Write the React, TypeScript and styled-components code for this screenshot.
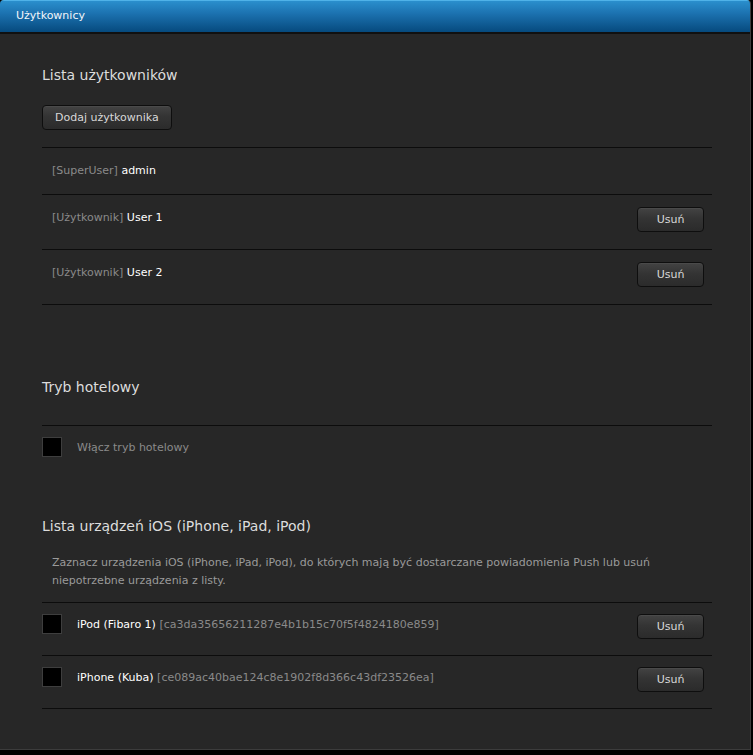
import styled, { createGlobalStyle } from "styled-components";

const GlobalStyle = createGlobalStyle`
  html, body {
    margin: 0;
    padding: 0;
    background: #000;
  }
  body {
    font-family: "DejaVu Sans", Verdana, sans-serif;
    font-size: 11px;
  }
`;

const Panel = styled.div`
  width: 750px;
  height: 749px;
  background-color: #272727;
  border-right: 1px solid #3c3c3c;
  border-bottom: 1px solid #3c3c3c;
  border-radius: 4px 4px 0 0;
  overflow: hidden;
`;

const Header = styled.div`
  background: linear-gradient(to bottom, #2a8fcd 0%, #1c72b0 40%, #064a7e 100%);
  border-top: 1px solid #4fb2e8;
  border-bottom: 2px solid #101010;
  box-sizing: border-box;
  height: 34px;
  display: flex;
  align-items: center;
  padding-left: 16px;
  padding-bottom: 2px;
  color: #f2f6fa;
  font-size: 11px;
`;

const Body = styled.div`
  padding: 0 38px 0 42px;
`;

const Section = styled.section<{ top: number }>`
  padding-top: ${(p) => p.top}px;
`;

const Spacer = styled.div<{ h: number }>`
  height: ${(p) => p.h}px;
`;

const Heading = styled.h2`
  margin: 0;
  font-weight: normal;
  font-size: 14px;
  color: #dcdcdc;
  line-height: 18px;
`;

const Button = styled.button`
  font-family: "DejaVu Sans", Verdana, sans-serif;
  font-size: 11px;
  color: #d8d8d8;
  height: 25px;
  padding: 0 12px;
  border: 1px solid #0e0e0e;
  border-radius: 4px;
  background: linear-gradient(to bottom, #434343 0%, #343434 45%, #2b2b2b 100%);
  box-shadow: inset 0 1px 0 #4a4a4a;
  cursor: pointer;
`;

const SmallButton = styled(Button)`
  width: 67px;
  padding: 0;
`;

const List = styled.div`
  border-top: 1px solid #0c0c0c;
`;

const Row = styled.div<{ h: number; pad?: number }>`
  height: ${(p) => p.h}px;
  border-bottom: 1px solid #0c0c0c;
  display: flex;
  align-items: flex-start;
  justify-content: space-between;
  padding: ${(p) => p.pad ?? 12}px 8px 0 0;
  box-sizing: border-box;
`;

const RowText = styled.div<{ offset: number }>`
  padding: ${(p) => p.offset}px 0 0 10px;
  line-height: 14px;
`;

const Tag = styled.span`
  color: #8a8a8a;
`;

const Name = styled.span`
  color: #ffffff;
`;

const Check = styled.div`
  width: 18px;
  height: 18px;
  background: #000;
  border: 1px solid #3e3e3e;
  flex: none;
`;

const CheckRow = styled.div`
  display: flex;
  align-items: center;
  gap: 15px;
  height: 20px;
`;

const CheckLabel = styled.span`
  color: #8a8a8a;
`;

const Desc = styled.p`
  margin: 0;
  padding: 0 10px;
  color: #9a9a9a;
  line-height: 18px;
`;

const DeviceInfo = styled.div`
  display: flex;
  align-items: center;
  gap: 15px;
`;

const users = [
  { role: "Użytkownik", name: "User 1" },
  { role: "Użytkownik", name: "User 2" },
];

const devices = [
  { name: "iPod (Fibaro 1)", id: "ca3da35656211287e4b1b15c70f5f4824180e859" },
  { name: "iPhone (Kuba)", id: "ce089ac40bae124c8e1902f8d366c43df23526ea" },
];

const App = () => {
  return (
    <>
      <GlobalStyle />
      <Panel>
        <Header>Użytkownicy</Header>
        <Body>
          <Section top={32}>
            <Heading>Lista użytkowników</Heading>
            <Spacer h={21} />
            <Button>Dodaj użytkownika</Button>
            <Spacer h={17} />
            <List>
              <Row h={47}>
                <RowText offset={4}>
                  <Tag>[SuperUser]</Tag> <Name>admin</Name>
                </RowText>
              </Row>
              {users.map((u) => (
                <Row h={55} key={u.name}>
                  <RowText offset={4}>
                    <Tag>[{u.role}]</Tag> <Name>{u.name}</Name>
                  </RowText>
                  <SmallButton>Usuń</SmallButton>
                </Row>
              ))}
            </List>
          </Section>
          <Section top={73}>
            <Heading>Tryb hotelowy</Heading>
            <Spacer h={29} />
            <List>
              <Spacer h={11} />
              <CheckRow>
                <Check />
                <CheckLabel>Włącz tryb hotelowy</CheckLabel>
              </CheckRow>
            </List>
          </Section>
          <Section top={60}>
            <Heading>Lista urządzeń iOS (iPhone, iPad, iPod)</Heading>
            <Spacer h={19} />
            <Desc>
              Zaznacz urządzenia iOS (iPhone, iPad, iPod), do których mają być
              dostarczane powiadomienia Push lub usuń niepotrzebne urządzenia z
              listy.
            </Desc>
            <Spacer h={12} />
            <List>
              {devices.map((d) => (
                <Row h={53} pad={11} key={d.id}>
                  <DeviceInfo>
                    <Check />
                    <span>
                      <Name>{d.name}</Name> <Tag>[{d.id}]</Tag>
                    </span>
                  </DeviceInfo>
                  <SmallButton>Usuń</SmallButton>
                </Row>
              ))}
            </List>
          </Section>
        </Body>
      </Panel>
    </>
  );
};

export default App;
